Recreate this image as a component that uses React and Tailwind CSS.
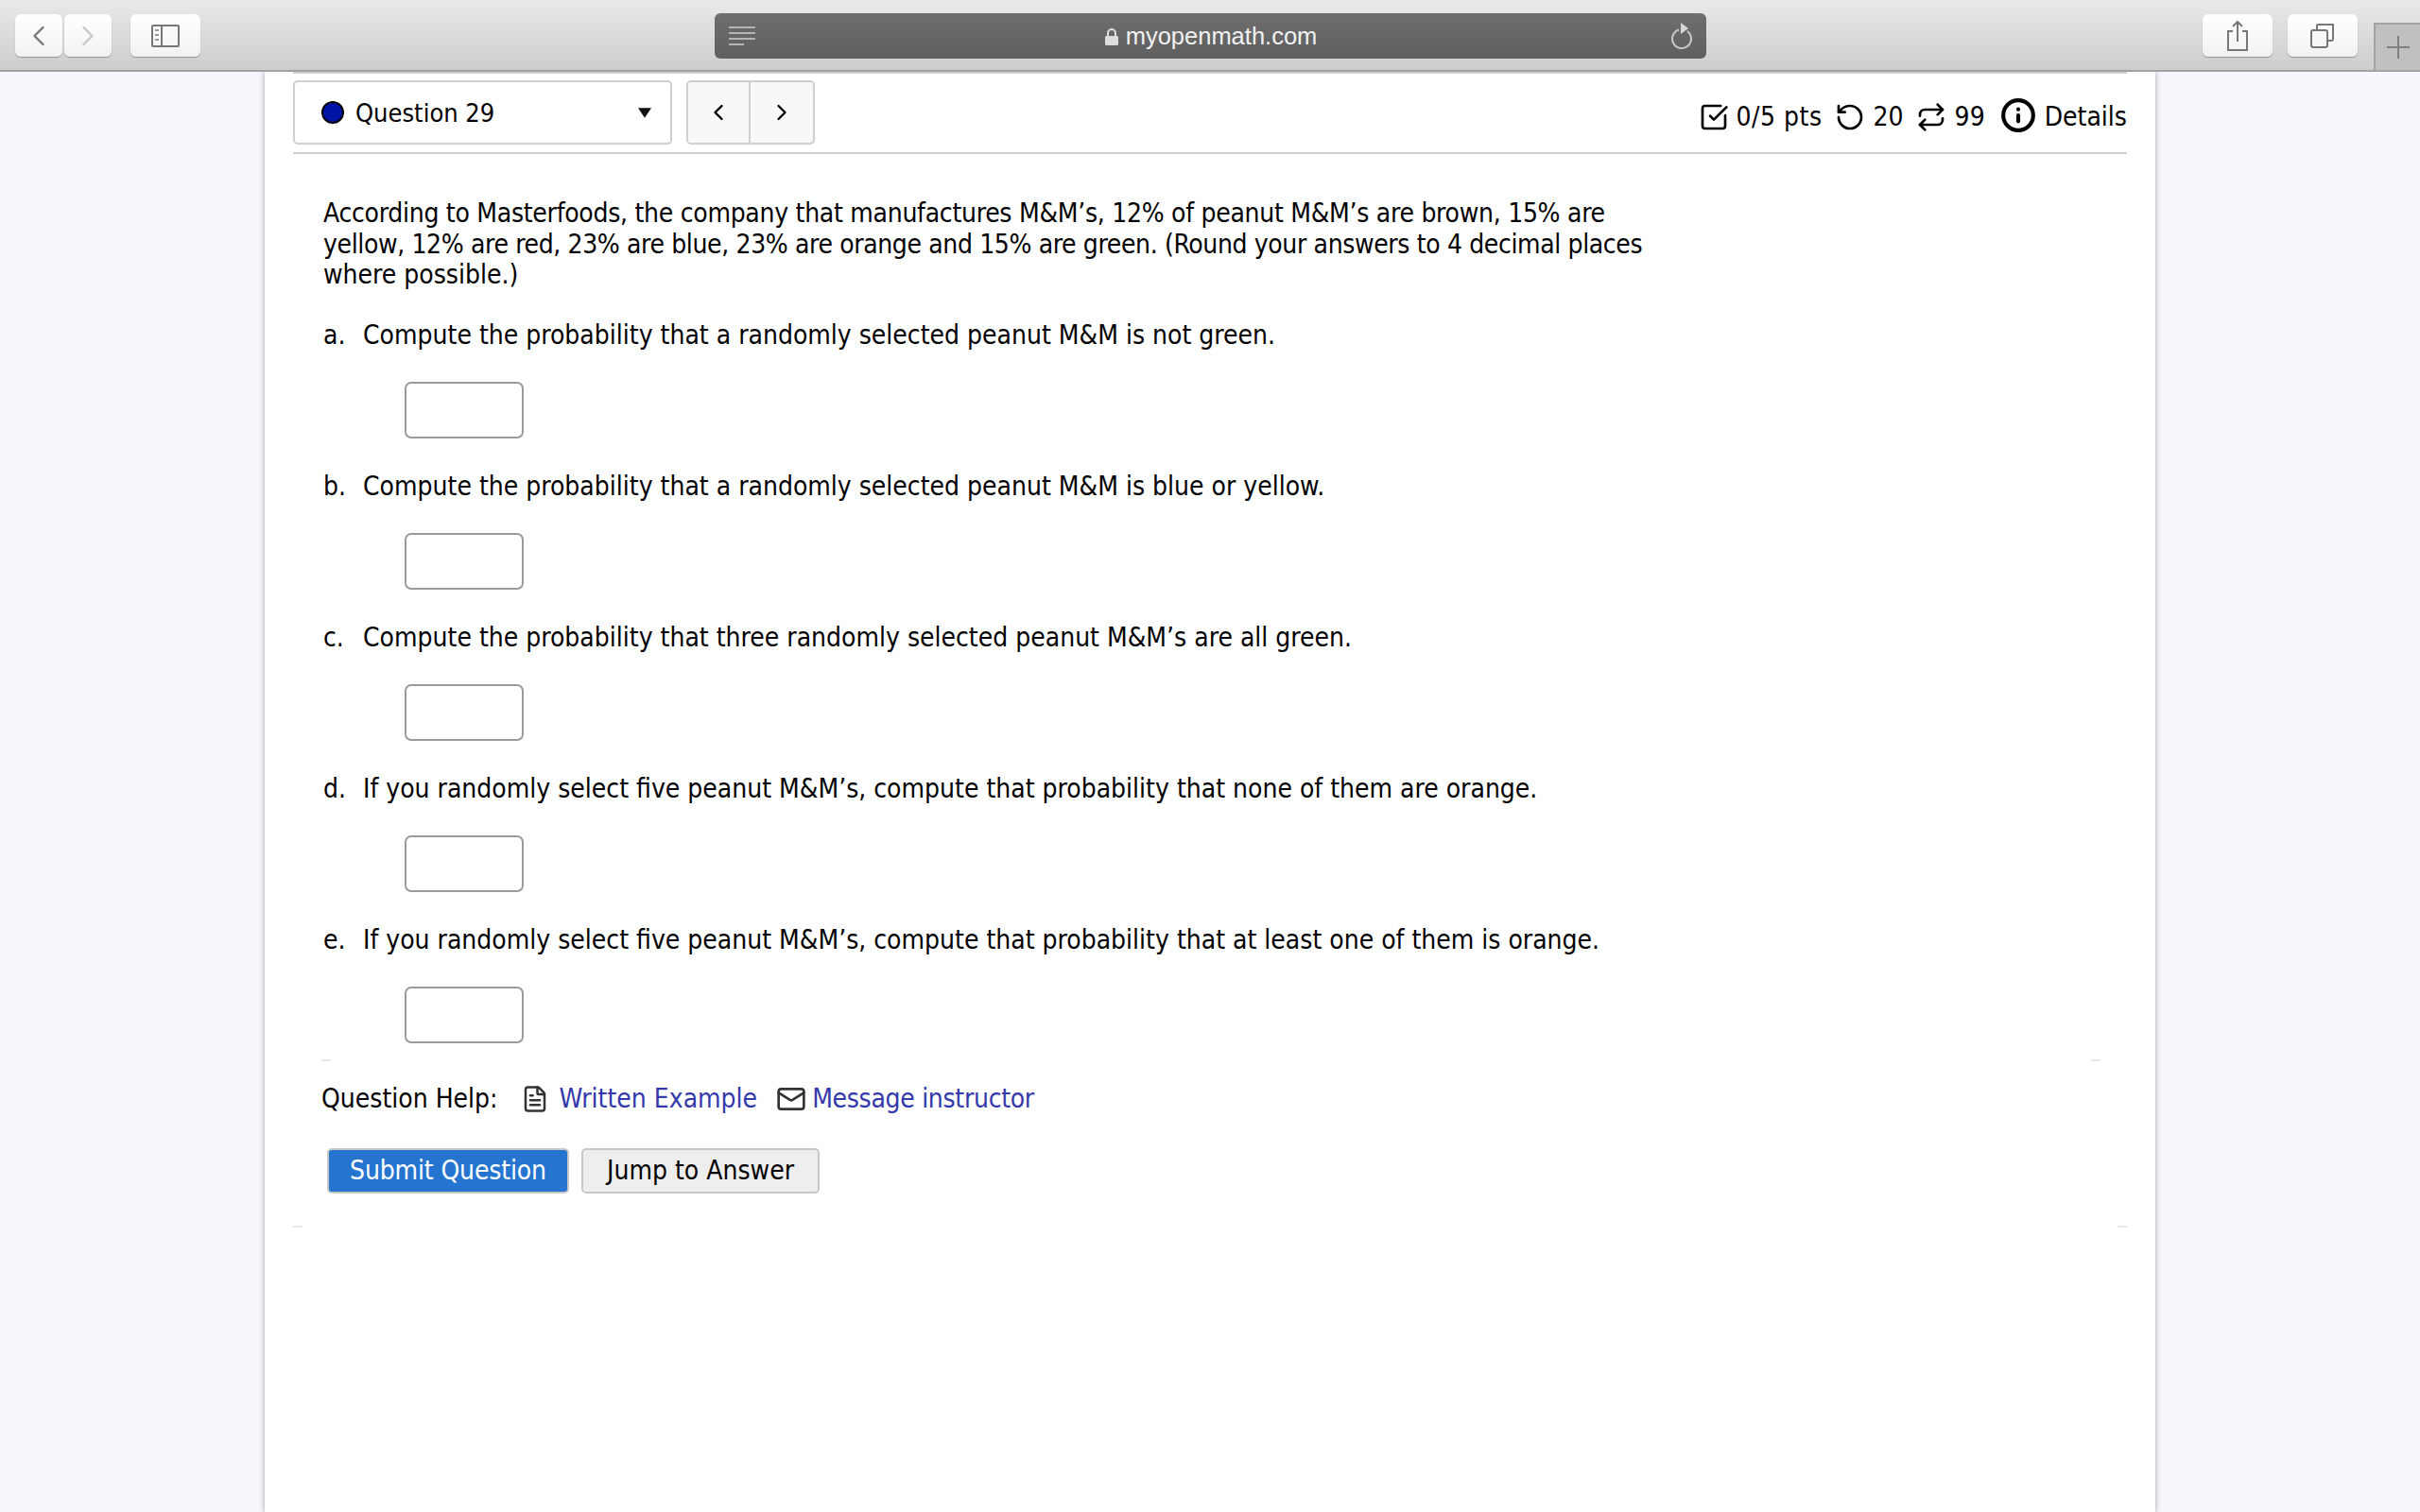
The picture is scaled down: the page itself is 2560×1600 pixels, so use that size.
import React from "react";
import { ChevronLeft, ChevronRight, SquareCheckBig, RotateCcw, Repeat, Info, FileText, Mail } from "lucide-react";

const parts = [
  { label: "a.", text: "Compute the probability that a randomly selected peanut M&M is not green." },
  { label: "b.", text: "Compute the probability that a randomly selected peanut M&M is blue or yellow." },
  { label: "c.", text: "Compute the probability that three randomly selected peanut M&M’s are all green." },
  { label: "d.", text: "If you randomly select five peanut M&M’s, compute that probability that none of them are orange." },
  { label: "e.", text: "If you randomly select five peanut M&M’s, compute that probability that at least one of them is orange." },
];

function ToolButton({ children, className = "" }) {
  return (
    <div className={`h-[45px] flex items-center justify-center rounded-[6px] bg-gradient-to-b from-white to-[#f2f2f2] shadow-[0_1px_1px_rgba(0,0,0,0.3)] ${className}`}>
      {children}
    </div>
  );
}

function FaintRule({ className = "" }) {
  return (
    <div className={`flex justify-between ${className}`}>
      <div className="w-[10px] h-[2px] bg-[#e8e8e8]" />
      <div className="w-[10px] h-[2px] bg-[#e8e8e8]" />
    </div>
  );
}

export default function App() {
  return (
    <div className="w-[2560px] h-[1600px] overflow-hidden flex flex-col bg-[#f7f8fe] text-black font-['DejaVu_Sans',sans-serif]">
      {/* safari toolbar */}
      <div className="h-[76px] shrink-0 flex items-start bg-gradient-to-b from-[#e9e9e9] to-[#cdcdcd] border-b-2 border-[#a3a3a3] relative">
        <div className="flex ml-[16px] mt-[15px] gap-[2px]">
          <ToolButton className="w-[50px]">
            <ChevronLeft size={36} strokeWidth={1.6} className="text-[#777]" />
          </ToolButton>
          <ToolButton className="w-[50px]">
            <ChevronRight size={36} strokeWidth={1.6} className="text-[#c8c8c8]" />
          </ToolButton>
        </div>
        <ToolButton className="w-[74px] ml-[20px] mt-[15px]">
          <svg width="30" height="26" viewBox="0 0 30 26" fill="none">
            <rect x="1" y="2" width="28" height="22" rx="1" stroke="#777" strokeWidth="2" />
            <path d="M11 2v22" stroke="#777" strokeWidth="2" />
            <path d="M4 7h4M4 12h4M4 17h4" stroke="#999" strokeWidth="2" />
          </svg>
        </ToolButton>
        <div className="ml-[544px] mt-[14px] w-[1049px] h-[48px] rounded-[6px] bg-gradient-to-b from-[#6e6e6e] to-[#5f5f5f] flex items-center relative">
          <svg className="ml-[15px]" width="28" height="24" viewBox="0 0 28 24" fill="none">
            <path d="M0 3h28M0 9h28M0 15h28M0 21h16" stroke="#b5b5b5" strokeWidth="2" />
          </svg>
          <div className="absolute inset-0 flex items-center justify-center text-[#f2f2f2] text-[25.5px] pt-[1px] font-['Liberation_Sans',sans-serif]">
            <svg className="mr-[7px]" width="16" height="20" viewBox="0 0 16 20">
              <path d="M4 9V6a4 4 0 0 1 8 0v3" fill="none" stroke="#ddd" strokeWidth="2" />
              <rect x="1" y="9" width="14" height="10" rx="1.5" fill="#ddd" />
            </svg>
            myopenmath.com
          </div>
          <svg className="ml-auto mr-[13px]" width="24" height="30" viewBox="0 0 24 30" fill="none">
            <path d="M8 8.5a10 10 0 1 0 9 1.5" stroke="#c8c8c8" strokeWidth="2" />
            <path d="M10 1l8 6-8 6z" fill="#d5d5d5" />
          </svg>
        </div>
        <ToolButton className="w-[74px] ml-[525px] mt-[15px]">
          <svg width="24" height="32" viewBox="0 0 24 32" fill="none">
            <path d="M7 11H2v20h20V11h-5M12 22V1M7 6l5-5 5 5" stroke="#777" strokeWidth="2" />
          </svg>
        </ToolButton>
        <ToolButton className="w-[74px] ml-[16px] mt-[15px]">
          <svg width="26" height="26" viewBox="0 0 26 26" fill="none">
            <rect x="1" y="7" width="17" height="18" rx="2" stroke="#777" strokeWidth="2" />
            <path d="M7 7V2a1 1 0 0 1 1-1h16v15a2 2 0 0 1-2 2h-4" stroke="#777" strokeWidth="2" />
          </svg>
        </ToolButton>
        <div className="ml-[17px] mt-[24px] flex-1 h-[50px] bg-[#c0c0c0] border-l-2 border-t-2 border-[#a3a3a3] flex items-center justify-center">
          <svg width="24" height="24" viewBox="0 0 24 24" fill="none">
            <path d="M12 0v24M0 12h24" stroke="#808080" strokeWidth="2" />
          </svg>
        </div>
      </div>

      {/* page */}
      <div className="flex-1 ml-[280px] w-[2000px] bg-white shadow-[0_0_6px_rgba(0,0,0,0.35)] px-[30px] text-[28px]" style={{ fontStretch: "condensed" }}>
        <div className="h-[2px] bg-[#d0d0d0]" />
        <div className="h-[85px] flex items-start border-b-2 border-[#cfcfcf]">
          <div className="mt-[7px] w-[401px] h-[68px] border-2 border-[#cfcfcf] rounded-[5px] flex items-center pl-[28px] pr-[20px]">
            <span className="w-[24px] h-[24px] rounded-full bg-[#0015a8] border-2 border-black mr-[12px]" />
            <span className="text-[27px] leading-none">Question 29</span>
            <svg className="ml-auto" width="14" height="11" viewBox="0 0 16 12">
              <path d="M0 0h16L8 12z" fill="#111" />
            </svg>
          </div>
          <div className="mt-[7px] ml-[15px] w-[136px] h-[68px] flex border-2 border-[#cfcfcf] rounded-[5px] bg-[#f8f8f8]">
            <div className="w-[66px] flex items-center justify-center border-r-2 border-[#cfcfcf]">
              <ChevronLeft size={28} strokeWidth={2} />
            </div>
            <div className="flex-1 flex items-center justify-center">
              <ChevronRight size={28} strokeWidth={2} />
            </div>
          </div>
          <div className="ml-auto mt-[18px] h-[56px] flex items-center">
            <SquareCheckBig size={32} strokeWidth={2} />
            <span className="ml-[8px] tracking-[0.5px]">0/5 pts</span>
            <RotateCcw size={32} strokeWidth={2} className="ml-[13px]" />
            <span className="ml-[9px]">20</span>
            <Repeat size={32} strokeWidth={2} className="ml-[13px]" />
            <span className="ml-[9px]">99</span>
            <Info size={38} strokeWidth={2.6} className="ml-[16px] -mt-[4px]" />
            <span className="ml-[9px]">Details</span>
          </div>
        </div>

        <div className="pl-[32px] pt-[47px] leading-[32.5px] whitespace-nowrap">
          <div className="tracking-[-0.28px]">According to Masterfoods, the company that manufactures M&amp;M’s, 12% of peanut M&amp;M’s are brown, 15% are</div>
          <div className="tracking-[-0.37px]">yellow, 12% are red, 23% are blue, 23% are orange and 15% are green. (Round your answers to 4 decimal places</div>
          <div>where possible.)</div>
        </div>

        <div className="pl-[32px] pt-[31px] flex flex-col">
          {parts.map((p) => (
            <div key={p.label} className="h-[160px]">
              <div className="h-[32px] leading-[32px] flex">
                <span className="w-[42px]">{p.label}</span>
                <span>{p.text}</span>
              </div>
              <input className="block mt-[33px] ml-[86px] w-[126px] h-[60px] border-2 border-[#9a9a9a] rounded-[7px] bg-white" />
            </div>
          ))}
        </div>

        <FaintRule className="ml-[30px] mr-[28px] -mt-[18px]" />

        <div className="mt-[22px] ml-[30px] h-[36px] flex items-center">
          <span>Question Help:</span>
          <FileText size={30} strokeWidth={2} className="ml-[24px] text-[#333]" />
          <span className="ml-[11px] text-[#3339aa]">Written Example</span>
          <Mail size={32} strokeWidth={2} className="ml-[20px] text-[#333]" />
          <span className="ml-[6px] text-[#3339aa] tracking-[-0.3px]">Message instructor</span>
        </div>

        <div className="mt-[34px] ml-[36px] flex gap-[13px]">
          <button className="h-[48px] w-[256px] rounded-[5px] bg-[#2575d0] border-2 border-[#c8c8c8] text-white text-[28px] tracking-[-0.15px]" style={{ fontStretch: "condensed" }}>
            Submit Question
          </button>
          <button className="h-[48px] w-[252px] rounded-[5px] bg-[#eeeeee] border-2 border-[#c8c8c8] text-black text-[28px]" style={{ fontStretch: "condensed" }}>
            Jump to Answer
          </button>
        </div>

        <FaintRule className="mt-[34px]" />
      </div>
    </div>
  );
}
